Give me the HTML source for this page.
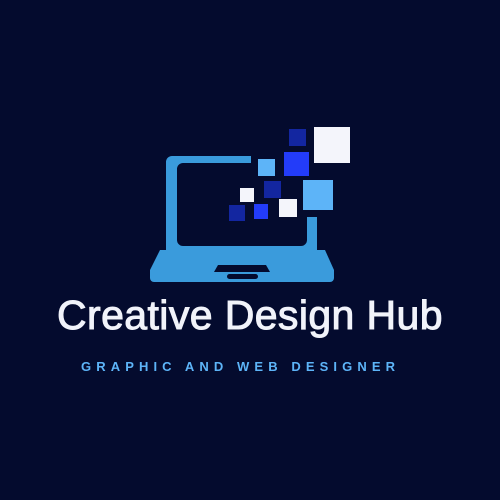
<!DOCTYPE html><html><head><style>
html,body{margin:0;padding:0}
body{width:500px;height:500px;background:#040b2e;position:relative;overflow:hidden;font-family:"Liberation Sans",sans-serif}
.t{position:absolute;left:0;width:500px;text-align:center;color:#f1f3fa;font-size:41px;font-weight:normal;top:292px;line-height:46px;letter-spacing:0.4px;-webkit-text-stroke:1px #f1f3fa}
.s{position:absolute;left:81px;top:359px;color:#5db4f8;font-size:13px;font-weight:bold;letter-spacing:5.1px;line-height:16px;white-space:nowrap}
</style></head><body>
<svg width="500" height="500" style="position:absolute;left:0;top:0">
<path d="M251 156H172a6 6 0 0 0-6 6V250H317V217H307V240a6 6 0 0 1-6 6H183a6 6 0 0 1-6-6V169a6 6 0 0 1 6-6H251Z" fill="#3a9bdc"/>
<path d="M160 250H325L334 270V278a4 4 0 0 1-4 4H154a4 4 0 0 1-4-4V270Z" fill="#3a9bdc"/>
<path d="M218 265H266L270 272H214Z" fill="#040b2e"/>
<rect x="227" y="274" width="31" height="5" rx="2.5" fill="#040b2e"/>
<rect x="289" y="129" width="17" height="17" fill="#1326a0"/>
<rect x="314" y="127" width="36" height="36" fill="#f4f5fb"/>
<rect x="258" y="159" width="17" height="17" fill="#5db4f8"/>
<rect x="284" y="152" width="25" height="24" fill="#233cf9"/>
<rect x="264" y="181" width="17" height="17" fill="#1326a0"/>
<rect x="303" y="180" width="30" height="30" fill="#5db4f8"/>
<rect x="240" y="188" width="14" height="14" fill="#f4f5fb"/>
<rect x="279" y="199" width="18" height="18" fill="#f4f5fb"/>
<rect x="229" y="205" width="16" height="16" fill="#1326a0"/>
<rect x="254" y="204" width="14" height="15" fill="#233cf9"/>
</svg>
<div class="t">Creative Design Hub</div>
<div class="s">GRAPHIC AND WEB DESIGNER</div>
</body></html>
